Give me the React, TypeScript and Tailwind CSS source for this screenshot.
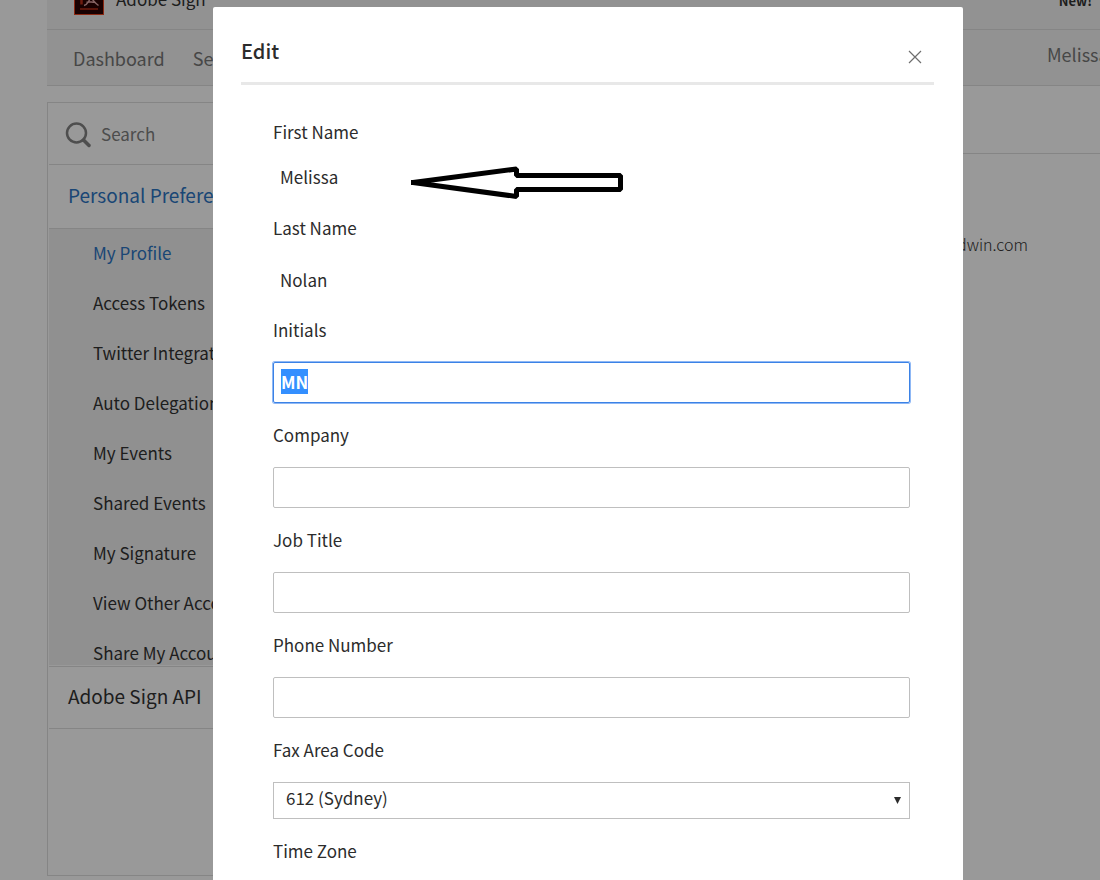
import React, { useEffect, useRef } from 'react';

const SIDEBAR_ITEMS = [
  'My Profile',
  'Access Tokens',
  'Twitter Integration',
  'Auto Delegation',
  'My Events',
  'Shared Events',
  'My Signature',
  'View Other Accounts',
  'Share My Account',
];

interface FieldProps {
  id: string;
  label: string;
}

const TextField: React.FC<FieldProps> = ({ id, label }) => (
  <div className="mb-5">
    <label htmlFor={id} className="block leading-6">{label}</label>
    <input
      id={id}
      type="text"
      className="mt-5 block h-[41px] w-full rounded-xs border border-[#bfbfbf] bg-white px-2 leading-6 outline-none"
    />
  </div>
);

const Header: React.FC = () => (
  <header className="bg-[#f3f3f3] whitespace-nowrap">
    <div className="flex h-[30px] items-end justify-between border-b border-[#dedede] pl-[27px]">
      <div className="flex items-end gap-3">
        <svg width="30" height="30" viewBox="0 0 30 30" className="mb-[14px]" aria-hidden="true">
          <rect x="0.5" y="0.5" width="29" height="29" fill="#2a0303" stroke="#e8431f" />
          <path d="M7.5 8 V19.5" stroke="#b8301a" strokeWidth="2.5" fill="none" />
          <path d="M6 24 H24" stroke="#b8301a" strokeWidth="1.5" fill="none" />
          <path
            d="M10 20.5 C13 20 17 14 17.5 8 C15 8 17 15 24.5 20.5 M12.5 17.5 C15 16 19 18 21 17"
            stroke="#e0a8a8"
            strokeWidth="1.5"
            fill="none"
          />
        </svg>
        <span className="mb-[18px] text-[17px] leading-6 text-[#333]">Adobe Sign</span>
      </div>
      <span className="mb-5 pr-2 text-[13px] leading-4 font-bold text-[#333]">New!</span>
    </div>
    <nav className="flex h-14 items-center border-b border-[#dedede] pt-0.5 pl-[26px] text-[18px] text-[#777]">
      <a href="#dashboard" className="mr-7">Dashboard</a>
      <a href="#send">Send</a>
      <a href="#account" className="mb-2 ml-auto w-[53px]">Melissa</a>
    </nav>
  </header>
);

const Sidebar: React.FC = () => (
  <aside className="flex h-[774px] w-[300px] shrink-0 flex-col border border-[#dedede] pl-px whitespace-nowrap">
    <div className="flex h-[62px] shrink-0 items-center gap-2 border-b border-[#dedede] pl-4">
      <svg width="28" height="28" viewBox="0 0 28 28" fill="none" stroke="#828282" aria-hidden="true">
        <circle cx="11.5" cy="13" r="9.5" strokeWidth="2.5" />
        <path d="M18.5 20 L24 25.5" strokeWidth="3.5" strokeLinecap="round" />
      </svg>
      <input
        type="text"
        aria-label="Search"
        placeholder="Search"
        className="w-40 text-[17px] leading-7 outline-none placeholder:text-[#808080]"
      />
    </div>
    <a href="#preferences" className="flex h-16 shrink-0 items-center border-b border-[#dedede] pb-0.5 pl-[19px] text-[19px] text-[#2c75c4]">
      Personal Preferences
    </a>
    <ul className="h-[436px] shrink-0 overflow-hidden bg-[#f0f0f0] pl-11 text-[17px]">
      {SIDEBAR_ITEMS.map((item, i) => (
        <li key={item} className="flex h-[50px] items-center pb-0.5">
          <a href="#item" className={i === 0 ? 'text-[#2c75c4]' : 'text-[#333]'}>{item}</a>
        </li>
      ))}
    </ul>
    <a href="#api" className="mt-px flex h-[63px] shrink-0 items-center border-y border-[#dedede] pb-0.5 pl-[19px] text-[19px] text-[#333]">
      Adobe Sign API
    </a>
  </aside>
);

const EditDialog: React.FC = () => {
  const initialsRef = useRef<HTMLInputElement>(null);

  useEffect(() => {
    initialsRef.current?.focus();
    initialsRef.current?.select();
  }, []);

  return (
    <div
      role="dialog"
      aria-modal="true"
      aria-labelledby="dialog-title"
      className="relative w-[750px] shrink-0 rounded-xs bg-white pr-[29px] pb-20 pl-7"
    >
      <div className="flex h-[78px] items-center justify-between border-b-3 border-[#e8e8e8] pt-3 pr-3">
        <h2 id="dialog-title" className="text-[20px] leading-7 font-medium">Edit</h2>
        <button type="button" aria-label="Close" className="mt-3">
          <svg width="14" height="14" viewBox="0 0 14 14" stroke="#6e6e6e" strokeWidth="1.2" aria-hidden="true">
            <path d="M1 1 L13 13 M13 1 L1 13" />
          </svg>
        </button>
      </div>

      <form className="mr-6 ml-8 pt-[35px]">
        <label htmlFor="first-name" className="block leading-6">First Name</label>
        <input id="first-name" type="text" readOnly defaultValue="Melissa" className="mb-2 block h-16 w-full px-[7px] outline-none" />
        <label htmlFor="last-name" className="block leading-6">Last Name</label>
        <input id="last-name" type="text" readOnly defaultValue="Nolan" className="block h-[78px] w-full px-[7px] outline-none" />

        <div className="mb-5">
          <label htmlFor="initials" className="block leading-6">Initials</label>
          <input
            id="initials"
            ref={initialsRef}
            type="text"
            defaultValue="MN"
            className="mt-5 block h-[41px] w-full rounded-xs border border-[#3b82e6] px-[7px] pb-0.5 leading-6 font-bold ring-1 ring-[#8fb8f5] outline-none selection:bg-[#338fff] selection:text-white"
          />
        </div>

        <TextField id="company" label="Company" />
        <TextField id="job-title" label="Job Title" />
        <TextField id="phone" label="Phone Number" />

        <label htmlFor="fax" className="block leading-6">Fax Area Code</label>
        <div className="relative mt-5 mb-5">
          <select id="fax" className="block h-[37px] w-full appearance-none border border-[#bfbfbf] bg-white pb-1.5 pl-3 outline-none">
            <option>612 (Sydney)</option>
          </select>
          <svg width="7" height="7" viewBox="0 0 7 7" className="pointer-events-none absolute top-[15px] right-[9px]" aria-hidden="true">
            <path d="M0 0 H7 L3.5 7 Z" fill="#2c2c2c" />
          </svg>
        </div>

        <label htmlFor="time-zone" className="block leading-6">Time Zone</label>
        <select id="time-zone" className="mt-5 block h-[37px] w-full appearance-none border border-[#bfbfbf] pl-3" />
      </form>

      {/* arrow pointing at the first name */}
      <svg width="214" height="34" viewBox="0 0 214 34" className="absolute top-[159px] left-[197px]" aria-hidden="true">
        <path d="M3 16.5 L106.5 3 V9.5 H210.5 V23.5 H106.5 V30.5 Z" fill="#fff" stroke="#000" strokeWidth="5" strokeLinejoin="bevel" />
        <path d="M1 14 H8 V19 H1 Z" fill="#000" />
      </svg>
    </div>
  );
};

const App: React.FC = () => (
  <div className="relative h-screen overflow-hidden bg-white font-['Noto_Sans_CJK_SC',sans-serif] text-[17px] text-[#2c2c2c]">
    <div className="pl-[47px]">
      <Header />
      <div className="mt-4 flex gap-5">
        <Sidebar />
        <main className="min-w-0 grow">
          <div className="h-[52px] border-b border-[#dedede]" />
          <p className="mt-[76px] pr-[72px] text-right text-[16px] leading-7 font-light text-[#333]">dwin.com</p>
        </main>
      </div>
    </div>
    <div className="fixed inset-0 flex items-start justify-center overflow-hidden bg-black/40 pt-[7px] pl-[76px]">
      <EditDialog />
    </div>
  </div>
);

export default App;
